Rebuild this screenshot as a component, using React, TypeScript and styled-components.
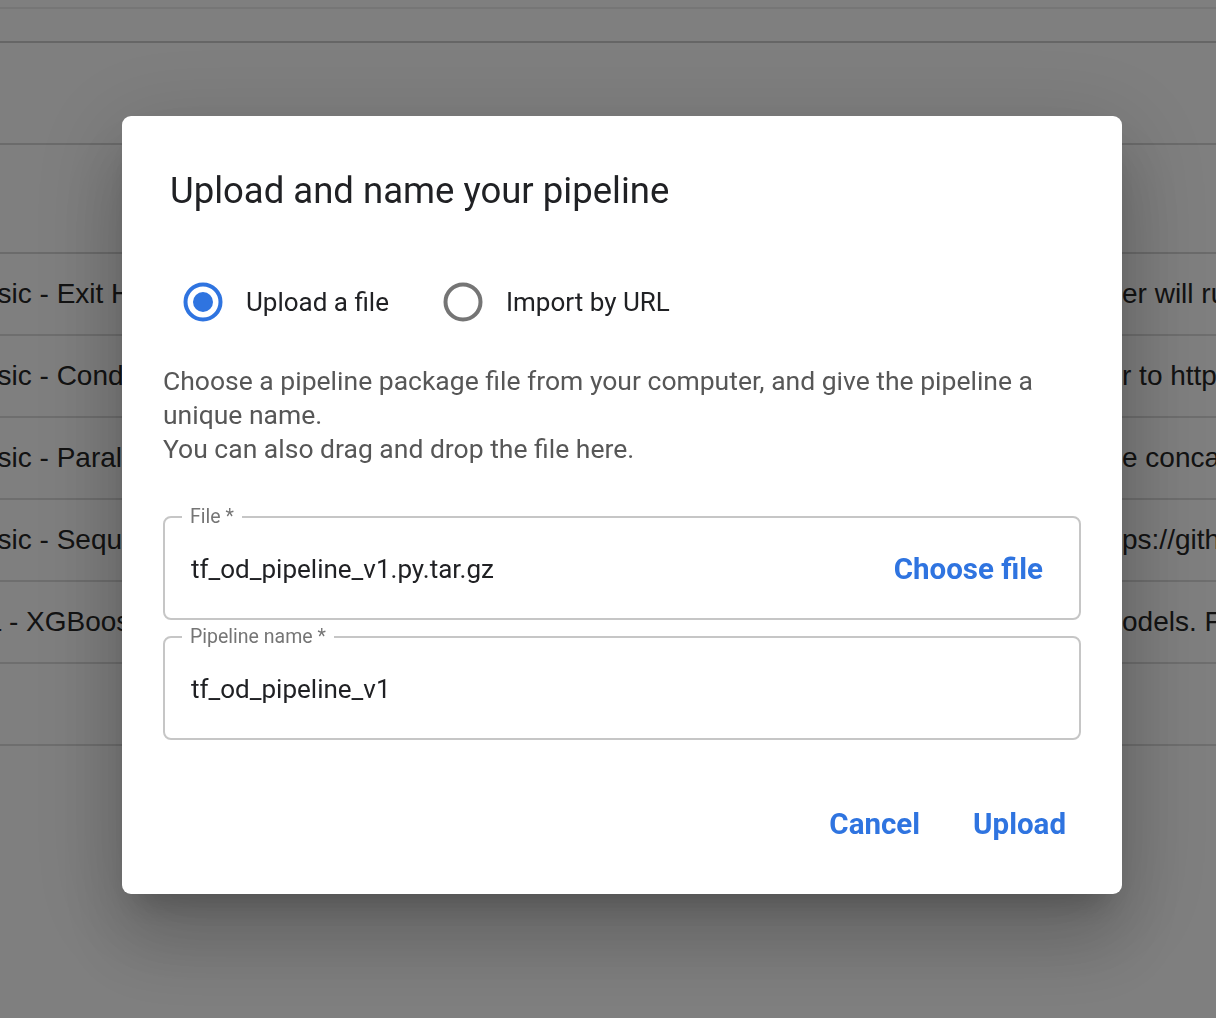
import React from "react";
import styled, { createGlobalStyle } from "styled-components";

const GlobalStyle = createGlobalStyle`
  html, body { margin: 0; padding: 0; background: #ffffff; }
  body { width: 1216px; height: 1018px; overflow: hidden; }
  * { box-sizing: border-box; }
`;

const BLUE = "#2f74e0";

/* ---------- background page ---------- */
const Page = styled.div`
  width: 1216px;
  height: 1018px;
  overflow: hidden;
  display: flex;
  flex-direction: column;
  font-family: "Liberation Sans", Arial, sans-serif;
`;

const Strip = styled.div<{ h: number; line: string }>`
  height: ${(p) => p.h}px;
  flex: none;
  border-bottom: 2px solid ${(p) => p.line};
`;

const Table = styled.div`
  display: flex;
  flex-direction: column;
  margin-left: -155px;
  width: 2200px;
`;

const Row = styled.div`
  height: 82px;
  flex: none;
  display: grid;
  grid-template-columns: 1277px 1fr;
  align-items: center;
  border-bottom: 2px solid #dcdcdc;
  font-size: 28px;
  color: #262626;
  white-space: nowrap;
`;

const Cell = styled.div`
  overflow: hidden;
`;

/* ---------- overlay & dialog ---------- */
const Backdrop = styled.div`
  position: fixed;
  inset: 0;
  background: rgba(0, 0, 0, 0.5);
`;

const Dialog = styled.div`
  position: fixed;
  left: 122px;
  top: 116px;
  width: 1000px;
  height: 778px;
  background: #fff;
  border-radius: 9px;
  box-shadow: 0 22px 30px -14px rgba(0, 0, 0, 0.2),
    0 48px 76px 6px rgba(0, 0, 0, 0.14), 0 18px 92px 16px rgba(0, 0, 0, 0.12);
  padding: 51px 41px 43px 41px;
  display: flex;
  flex-direction: column;
  font-family: Roboto, "Noto Sans", sans-serif;
`;

const Title = styled.h2`
  margin: 0 0 0 7px;
  font-size: 36.5px;
  line-height: 48px;
  font-weight: 400;
  color: #202124;
`;

const RadioGroup = styled.div`
  display: flex;
  align-items: center;
  height: 56px;
  margin-top: 59px;
  padding-left: 16px;
  gap: 50px;
`;

const RadioOption = styled.label`
  display: flex;
  align-items: center;
  gap: 19px;
  font-size: 26px;
  color: #202124;
  cursor: pointer;
`;

const RadioBox = styled.span`
  width: 48px;
  height: 48px;
  display: flex;
  align-items: center;
  justify-content: center;
`;

const Description = styled.p`
  margin: 34px 0 0 0;
  font-size: 26.5px;
  line-height: 34px;
  color: #575757;
`;

const Field = styled.fieldset<{ first?: boolean }>`
  margin: ${(p) => (p.first ? "39px" : "5px")} 0 0 0;
  border: 2px solid #c6c6c6;
  border-radius: 8px;
  padding: 20px 20px 29px 26px;
  min-width: 0;
`;

const Legend = styled.legend`
  margin-inline-start: -9px;
  padding: 0 8px;
  font-size: 19.5px;
  line-height: 24px;
  color: #757575;
`;

const FieldRow = styled.div`
  display: flex;
  align-items: center;
  justify-content: space-between;
  height: 40px;
`;

const Value = styled.span`
  font-size: 26px;
  color: #202124;
`;

const TextButton = styled.button`
  border: none;
  background: transparent;
  font-family: Roboto, "Noto Sans", sans-serif;
  font-weight: 700;
  font-size: 29.5px;
  color: ${BLUE};
  padding: 10px 16px;
  cursor: pointer;
`;

const Actions = styled.div`
  margin-top: auto;
  display: flex;
  justify-content: flex-end;
  align-items: center;
  gap: 21px;
  margin-right: -1px;
`;

const Radio = ({ checked }: { checked: boolean }) => (
  <RadioBox>
    <svg width="40" height="40" viewBox="0 0 40 40">
      <circle
        cx="20"
        cy="20"
        r="17.5"
        fill="none"
        stroke={checked ? BLUE : "#757575"}
        strokeWidth="4"
      />
      {checked && <circle cx="20" cy="20" r="10" fill={BLUE} />}
    </svg>
  </RadioBox>
);

const rows = [
  ["[Sample] Basic - Exit Handler", "er will run after the pipeline finishes."],
  ["[Sample] Basic - Conditional execution", "r to https://github.com/kubeflow/pipelines"],
  ["[Sample] Basic - Parallel execution", "e concatenates the outputs of parallel steps"],
  ["[Sample] Basic - Sequential execution", "ps://github.com/kubeflow/pipelines/blob"],
  ["[Sample] ML - XGBoost - Training with Confusion Matrix", "odels. For source code, refer to"],
];

export default function App() {
  return (
    <>
      <GlobalStyle />
      <Page>
        <Strip h={9} line="#ececec" />
        <Strip h={34} line="#cdcdcd" />
        <Strip h={102} line="#d6d6d6" />
        <Strip h={109} line="#d6d6d6" />
        <Table>
          {rows.map(([name, desc]) => (
            <Row key={name}>
              <Cell>{name}</Cell>
              <Cell>{desc}</Cell>
            </Row>
          ))}
          <Row>
            <Cell />
            <Cell />
          </Row>
        </Table>
      </Page>
      <Backdrop />
      <Dialog role="dialog">
        <Title>Upload and name your pipeline</Title>
        <RadioGroup>
          <RadioOption>
            <Radio checked />
            Upload a file
          </RadioOption>
          <RadioOption>
            <Radio checked={false} />
            Import by URL
          </RadioOption>
        </RadioGroup>
        <Description>
          Choose a pipeline package file from your computer, and give the pipeline a unique name.
          <br />
          You can also drag and drop the file here.
        </Description>
        <Field first>
          <Legend>File *</Legend>
          <FieldRow>
            <Value>tf_od_pipeline_v1.py.tar.gz</Value>
            <TextButton>Choose file</TextButton>
          </FieldRow>
        </Field>
        <Field>
          <Legend>Pipeline name *</Legend>
          <FieldRow>
            <Value>tf_od_pipeline_v1</Value>
          </FieldRow>
        </Field>
        <Actions>
          <TextButton>Cancel</TextButton>
          <TextButton>Upload</TextButton>
        </Actions>
      </Dialog>
    </>
  );
}
